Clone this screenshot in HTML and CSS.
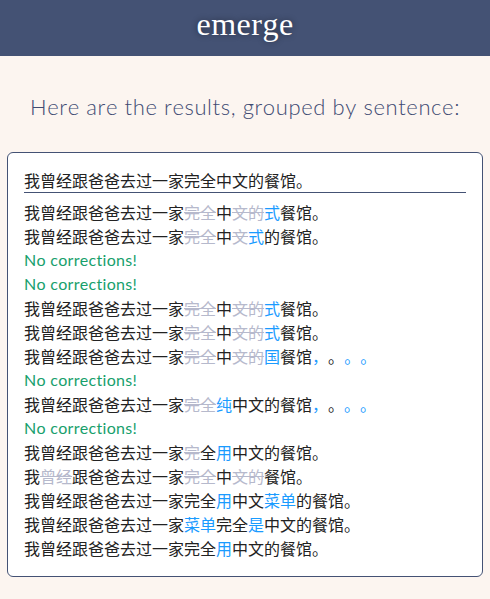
FILE: index.html
```html
<!DOCTYPE html>
<html lang="zh">
<head>
<meta charset="utf-8">
<title>emerge</title>
<link rel="stylesheet" href="styles.css">
</head>
<body>
<header class="topbar"><h1 class="brand">emerge</h1></header>
<main class="content">
  <p class="intro">Here are the results, grouped by sentence:</p>
  <section class="card">
    <div class="source">我曾经跟爸爸去过一家完全中文的餐馆。</div>
    <ul class="results">
      <li class="row">我曾经跟爸爸去过一家<del>完全</del>中<del>文的</del><ins>式</ins>餐馆。</li>
      <li class="row">我曾经跟爸爸去过一家<del>完全</del>中<del>文</del><ins>式</ins>的餐馆。</li>
      <li class="row ok">No corrections!</li>
      <li class="row ok">No corrections!</li>
      <li class="row">我曾经跟爸爸去过一家<del>完全</del>中<del>文的</del><ins>式</ins>餐馆。</li>
      <li class="row">我曾经跟爸爸去过一家<del>完全</del>中<del>文的</del><ins>式</ins>餐馆。</li>
      <li class="row">我曾经跟爸爸去过一家<del>完全</del>中<del>文的</del><ins>国</ins>餐馆<ins>，</ins>。<ins>。。</ins></li>
      <li class="row ok">No corrections!</li>
      <li class="row">我曾经跟爸爸去过一家<del>完全</del><ins>纯</ins>中文的餐馆<ins>，</ins>。<ins>。。</ins></li>
      <li class="row ok">No corrections!</li>
      <li class="row">我曾经跟爸爸去过一家<del>完</del>全<ins>用</ins>中文的餐馆。</li>
      <li class="row">我<del>曾经</del>跟爸爸去过一家<del>完全</del>中<del>文的</del>餐馆。</li>
      <li class="row">我曾经跟爸爸去过一家完全<ins>用</ins>中文<ins>菜单</ins>的餐馆。</li>
      <li class="row">我曾经跟爸爸去过一家<ins>菜单</ins>完全<ins>是</ins>中文的餐馆。</li>
      <li class="row">我曾经跟爸爸去过一家完全<ins>用</ins>中文的餐馆。</li>
    </ul>
  </section>
</main>
</body>
</html>
```
FILE: styles.css
```css
* { box-sizing: border-box; }
html, body {
  margin: 0;
  padding: 0;
  background: #fcf5f0;
}
body {
  font-family: "Lato", "Noto Sans CJK SC", sans-serif;
  color: #222;
  text-spacing-trim: space-all;
  font-kerning: none;
}
.topbar {
  height: 56px;
  background: #445274;
  display: flex;
  align-items: center;
  justify-content: center;
}
.brand {
  margin: 0;
  font-family: "Liberation Serif", "DejaVu Serif", serif;
  font-weight: 400;
  font-size: 32px;
  color: #fff;
  letter-spacing: 0.5px;
  text-shadow: 0 0 6px rgba(0, 0, 0, 0.45);
  line-height: 1;
  padding-bottom: 8px;
}
.content {
  padding: 0 7px;
}
.intro {
  margin: 0;
  padding: 37px 0 0;
  height: 96px;
  text-align: center;
  font-family: "Lato", sans-serif;
  font-weight: 300;
  font-size: 22px;
  letter-spacing: 0.6px;
  color: #3f4b73;
}
.card {
  background: #fff;
  border: 1px solid #445274;
  border-radius: 6px;
  padding: 16px 16px 16px;
}
.source {
  font-family: "Noto Sans CJK SC", sans-serif;
  font-size: 16px;
  line-height: 23px;
  color: #222;
  border-bottom: 1px solid #445274;
  margin-bottom: 7px;
}
.results {
  list-style: none;
  margin: 0;
  padding: 0;
}
.row {
  font-family: "Noto Sans CJK SC", sans-serif;
  font-size: 16px;
  line-height: 24px;
  height: 24px;
  color: #222;
  white-space: nowrap;
  font-feature-settings: "palt" 0, "halt" 0, "chws" 0;
}
.row.ok {
  font-family: "Lato", sans-serif;
  color: #17a06c;
  letter-spacing: 0.3px;
}
del {
  color: #b6b9cc;
  text-decoration: line-through;
  text-decoration-color: #b6b9cc;
}
ins {
  color: #1a9bff;
  text-decoration: none;
}
```
